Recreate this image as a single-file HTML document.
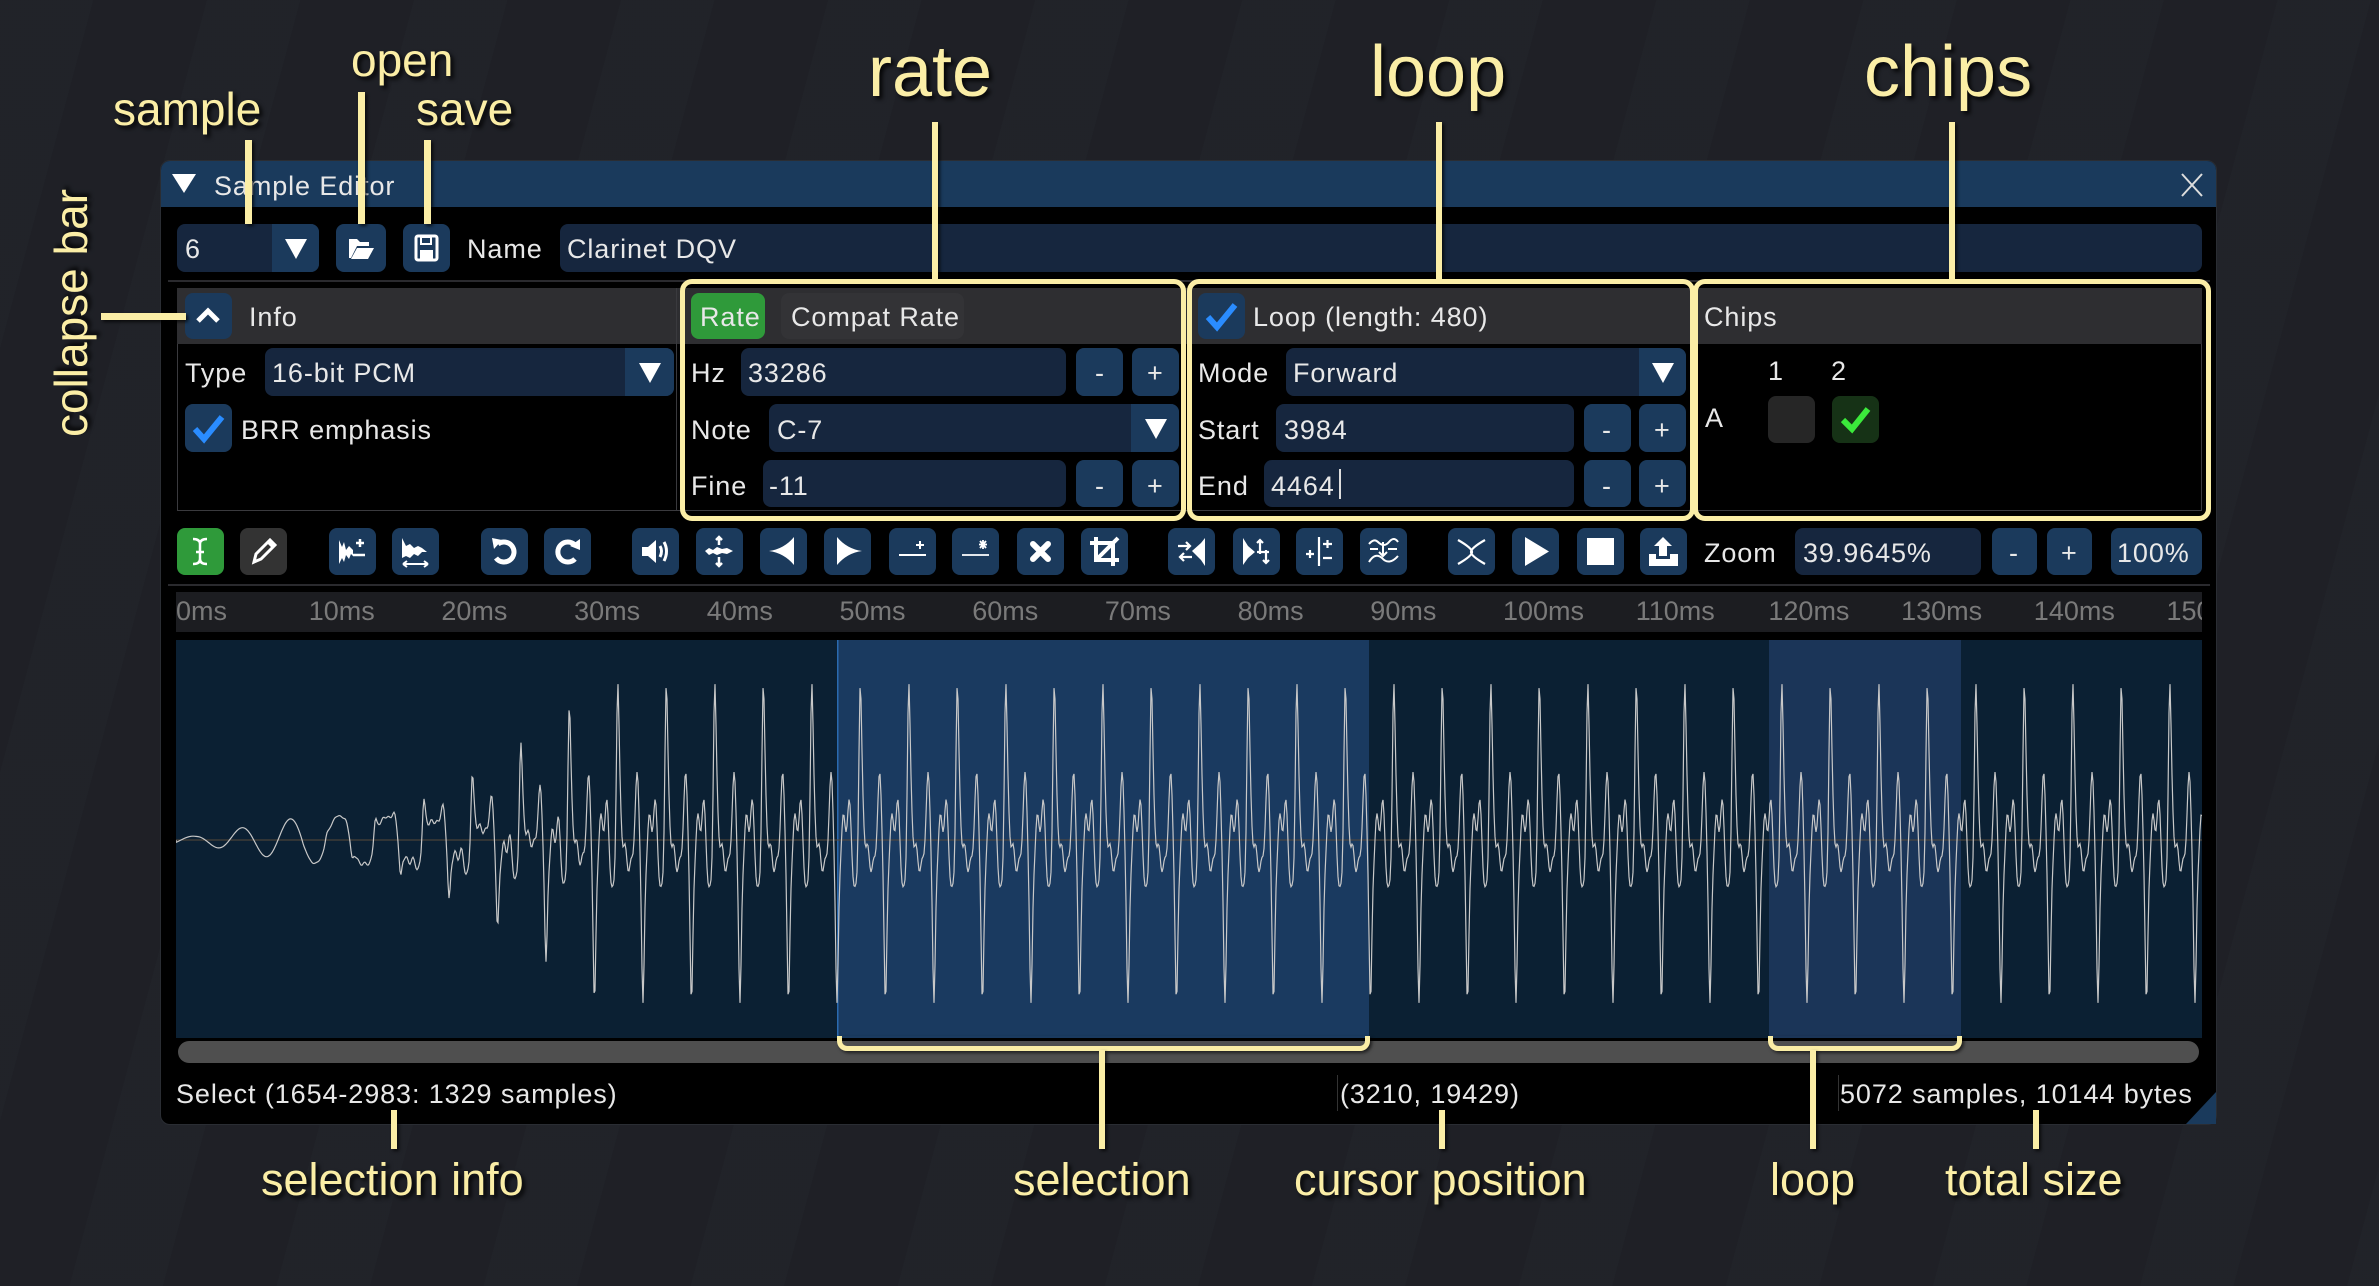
<!DOCTYPE html>
<html><head><meta charset="utf-8">
<style>
*{margin:0;padding:0;box-sizing:border-box}
body{width:2379px;height:1286px;overflow:hidden;position:relative;
background:#1f2127;
background-image:repeating-linear-gradient(105deg,rgba(255,255,255,0.006) 0 90px,rgba(0,0,0,0.015) 90px 200px);
font-family:"Liberation Sans",sans-serif;color:#e8e8e8;font-size:27px}
.a{position:absolute}
.win{position:absolute;left:160px;top:160px;width:2057px;height:965px;background:#000;border-radius:10px;border:1px solid #2a2d33;overflow:hidden}
.b{position:absolute;background:#1b3a5c;border-radius:8px;width:47px;height:47px}
.b svg{position:absolute;left:0;top:0}
.f{position:absolute;background:#16263e;border-radius:8px;height:48px}
.t{position:absolute;white-space:nowrap;line-height:1;letter-spacing:0.9px}
.y{position:absolute;background:#fbeea6;box-shadow:2px 2px 3px rgba(0,0,0,.7)}
.yt{position:absolute;color:#fbeea6;white-space:nowrap;line-height:1;text-shadow:3px 3px 4px rgba(0,0,0,.85)}
.ybox{position:absolute;border:5px solid #fbeea6;border-radius:12px}
.tl{position:absolute;top:598px;color:#7a7a7a;font-size:27px;line-height:1}
</style></head><body>

<div class="win"></div>
<div class="a" style="left:161px;top:161px;width:2055px;height:46px;background:#1a3a5c;border-radius:9px 9px 0 0"></div>
<svg class="a" style="left:170px;top:172px" width="28" height="22"><polygon points="2,2 26,2 14,21" fill="#fff"/></svg>
<div class="t" style="left:214px;top:173px">Sample Editor</div>
<svg class="a" style="left:2180px;top:172px" width="24" height="26"><path d="M2 2 L22 24 M22 2 L2 24" stroke="#ddd" stroke-width="2"/></svg>

<div class="f" style="left:177px;top:224px;width:142px"></div>
<div class="a" style="left:272px;top:224px;width:47px;height:48px;background:#1b3a5c;border-radius:0 8px 8px 0"></div>
<svg class="a" style="left:284px;top:238px" width="24" height="22"><polygon points="1,1 23,1 12,21" fill="#fff"/></svg>
<div class="t" style="left:185px;top:236px">6</div>
<div class="b" style="left:336px;top:224px;width:50px;height:48px"><svg width="50" height="48"><path d="M13 34 V15 h8 l3 3 h9 v4 h-12 l-6 12z M15 35 l6-11 h17 l-6 11z" fill="#fff"/></svg></div>
<div class="b" style="left:403px;top:224px;height:48px"><svg width="47" height="48"><rect x="13" y="12" width="21" height="24" rx="2" fill="none" stroke="#fff" stroke-width="3"/><rect x="18" y="13" width="10" height="7" fill="none" stroke="#fff" stroke-width="2"/><rect x="17" y="26" width="13" height="9" fill="#fff"/></svg></div>
<div class="t" style="left:467px;top:236px">Name</div>
<div class="f" style="left:560px;top:224px;width:1642px"></div>
<div class="t" style="left:567px;top:236px">Clarinet DQV</div>
<div class="a" style="left:168px;top:280px;width:2042px;height:2px;background:#2a2a2e"></div>

<div class="a" style="left:177px;top:288px;width:2025px;height:223px;border:1px solid #3a3a3e"></div>
<div class="a" style="left:177px;top:288px;width:2025px;height:56px;background:#2e2e31"></div>
<div class="a" style="left:676px;top:288px;width:1px;height:223px;background:#3a3a3e"></div>
<div class="b" style="left:185px;top:293px;height:46px"><svg width="47" height="46"><path d="M13 28 L23 18 L33 28" fill="none" stroke="#fff" stroke-width="5"/></svg></div>
<div class="t" style="left:249px;top:304px">Info</div>
<div class="t" style="left:185px;top:360px">Type</div>
<div class="f" style="left:265px;top:348px;width:409px"></div>
<div class="a" style="left:625px;top:348px;width:49px;height:48px;background:#1b3a5c;border-radius:0 8px 8px 0"></div>
<svg class="a" style="left:638px;top:362px" width="24" height="22"><polygon points="1,1 23,1 12,21" fill="#fff"/></svg>
<div class="t" style="left:272px;top:360px">16-bit PCM</div>
<div class="b" style="left:185px;top:404px;height:48px"><svg width="47" height="48"><path d="M10 25 L19 35 L37 13" fill="none" stroke="#2a8cff" stroke-width="6"/></svg></div>
<div class="t" style="left:241px;top:417px">BRR emphasis</div>
<div class="a" style="left:691px;top:293px;width:74px;height:46px;background:#2f9a3a;border-radius:8px"></div>
<div class="t" style="left:700px;top:304px">Rate</div>
<div class="a" style="left:781px;top:293px;width:183px;height:46px;background:#333336;border-radius:8px"></div>
<div class="t" style="left:791px;top:304px">Compat Rate</div>
<div class="t" style="left:691px;top:360px">Hz</div>
<div class="f" style="left:741px;top:348px;width:325px"></div>
<div class="t" style="left:748px;top:360px">33286</div>
<div class="b" style="left:1076px;top:348px;height:48px"></div><div class="t" style="left:1095px;top:360px">-</div>
<div class="b" style="left:1132px;top:348px;height:48px"></div><div class="t" style="left:1147px;top:360px">+</div>
<div class="t" style="left:691px;top:417px">Note</div>
<div class="f" style="left:769px;top:404px;width:410px"></div>
<div class="a" style="left:1131px;top:404px;width:48px;height:48px;background:#1b3a5c;border-radius:0 8px 8px 0"></div>
<svg class="a" style="left:1144px;top:418px" width="24" height="22"><polygon points="1,1 23,1 12,21" fill="#fff"/></svg>
<div class="t" style="left:777px;top:417px">C-7</div>
<div class="t" style="left:691px;top:473px">Fine</div>
<div class="f" style="left:763px;top:460px;width:303px;height:47px"></div>
<div class="t" style="left:769px;top:473px">-11</div>
<div class="b" style="left:1076px;top:460px"></div><div class="t" style="left:1095px;top:473px">-</div>
<div class="b" style="left:1132px;top:460px"></div><div class="t" style="left:1147px;top:473px">+</div>
<div class="b" style="left:1198px;top:293px;height:46px"><svg width="47" height="46"><path d="M10 24 L19 34 L37 12" fill="none" stroke="#2a8cff" stroke-width="6"/></svg></div>
<div class="t" style="left:1253px;top:304px">Loop (length: 480)</div>
<div class="t" style="left:1198px;top:360px">Mode</div>
<div class="f" style="left:1286px;top:348px;width:400px"></div>
<div class="a" style="left:1639px;top:348px;width:47px;height:48px;background:#1b3a5c;border-radius:0 8px 8px 0"></div>
<svg class="a" style="left:1651px;top:362px" width="24" height="22"><polygon points="1,1 23,1 12,21" fill="#fff"/></svg>
<div class="t" style="left:1293px;top:360px">Forward</div>
<div class="t" style="left:1198px;top:417px">Start</div>
<div class="f" style="left:1276px;top:404px;width:298px"></div>
<div class="t" style="left:1284px;top:417px">3984</div>
<div class="b" style="left:1584px;top:404px;height:48px"></div><div class="t" style="left:1602px;top:417px">-</div>
<div class="b" style="left:1639px;top:404px;height:48px"></div><div class="t" style="left:1654px;top:417px">+</div>
<div class="t" style="left:1198px;top:473px">End</div>
<div class="f" style="left:1264px;top:460px;width:310px;height:47px"></div>
<div class="t" style="left:1271px;top:473px">4464</div>
<div class="a" style="left:1339px;top:469px;width:2px;height:30px;background:#ddd"></div>
<div class="b" style="left:1584px;top:460px"></div><div class="t" style="left:1602px;top:473px">-</div>
<div class="b" style="left:1639px;top:460px"></div><div class="t" style="left:1654px;top:473px">+</div>
<div class="t" style="left:1704px;top:304px">Chips</div>
<div class="t" style="left:1768px;top:358px">1</div>
<div class="t" style="left:1831px;top:358px">2</div>
<div class="t" style="left:1705px;top:405px">A</div>
<div class="a" style="left:1768px;top:396px;width:47px;height:47px;background:#262626;border-radius:8px"></div>
<div class="a" style="left:1832px;top:396px;width:47px;height:47px;background:#163216;border-radius:8px"></div>
<svg class="a" style="left:1832px;top:396px" width="47" height="47"><path d="M11 24 L20 33 L36 13" fill="none" stroke="#3bea3b" stroke-width="6"/></svg>

<div class="b" style="left:177px;top:528px;background:#2f9a3a"><svg width="47" height="47"><path d="M16 11 Q23 11 23 16 Q23 11 30 11 M23 16 V31 M16 36 Q23 36 23 31 Q23 36 30 36 M19 24 H27" fill="none" stroke="#fff" stroke-width="2.5"/></svg></div>
<div class="b" style="left:240px;top:528px;background:#333"><svg width="47" height="47"><path d="M14 34 L16 26 L30 12 L35 17 L21 31 Z M28 14 L33 19" fill="none" stroke="#fff" stroke-width="3"/></svg></div>
<div class="b" style="left:329px;top:528px"><svg width="47" height="47"><path d="M10 12 V36 L13 30 L15 34 L17 27 L20 31 L22 26 L24 28 V22 L20 18 L17 22 L15 14 L13 19Z" fill="#fff"/><path d="M24 27 H36 M31 11 V19 M27 15 H35" stroke="#fff" stroke-width="2.5"/></svg></div>
<div class="b" style="left:392px;top:528px"><svg width="47" height="47"><path d="M10 10 V30 L14 28 L18 30 L22 26 L26 28 L30 24 L35 24 L30 20 L26 18 L22 20 L18 16 L14 18Z" fill="#fff"/><path d="M11 36 H36 M11 36 l4-3 M11 36 l4 3 M36 36 l-4-3 M36 36 l-4 3" stroke="#fff" stroke-width="2"/></svg></div>
<div class="b" style="left:481px;top:528px"><svg width="47" height="47"><path d="M17 16 A10 10 0 1 1 15 30" fill="none" stroke="#fff" stroke-width="5"/><polygon points="11,10 21,12 13,21" fill="#fff"/></svg></div>
<div class="b" style="left:544px;top:528px"><svg width="47" height="47"><path d="M31 17 A10 10 0 1 0 31 31" fill="none" stroke="#fff" stroke-width="5"/><polygon points="36,11 36,22 26,18" fill="#fff"/></svg></div>
<div class="b" style="left:632px;top:528px"><svg width="47" height="47"><path d="M10 19 H16 L24 12 V35 L16 28 H10Z" fill="#fff"/><path d="M28 18 Q31 23 28 29 M32 14 Q37 23 32 33" fill="none" stroke="#fff" stroke-width="3"/></svg></div>
<div class="b" style="left:696px;top:528px"><svg width="47" height="47"><path d="M9 23 L13 20 L17 22 L21 19 L26 21 L31 20 L37 23 L31 26 L26 25 L21 27 L17 25 L13 27Z" fill="#fff"/><path d="M23 17 V9 M20 12 L23 9 L26 12 M23 29 V38 M20 35 L23 38 L26 35" fill="none" stroke="#fff" stroke-width="2.5"/></svg></div>
<div class="b" style="left:760px;top:528px"><svg width="47" height="47"><path d="M9 23 Q24 21 34 9 V37 Q24 25 9 23Z" fill="#fff"/></svg></div>
<div class="b" style="left:824px;top:528px"><svg width="47" height="47"><path d="M38 23 Q23 21 13 9 V37 Q23 25 38 23Z" fill="#fff"/></svg></div>
<div class="b" style="left:889px;top:528px"><svg width="47" height="47"><path d="M10 27 H37 M31 13 V21 M27 17 H35" stroke="#fff" stroke-width="2"/></svg></div>
<div class="b" style="left:952px;top:528px"><svg width="47" height="47"><path d="M10 27 H37 M31 12 V21 M27 16.5 H35 M28 13 L34 20 M34 13 L28 20" stroke="#fff" stroke-width="1.8"/></svg></div>
<div class="b" style="left:1017px;top:528px"><svg width="47" height="47"><path d="M16 16 L31 31 M31 16 L16 31" stroke="#fff" stroke-width="6" stroke-linecap="round"/></svg></div>
<div class="b" style="left:1081px;top:528px"><svg width="47" height="47"><path d="M15 9 V32 H38 M9 15 H32 V38 M16 31 L37 10" fill="none" stroke="#fff" stroke-width="4"/></svg></div>
<div class="b" style="left:1168px;top:528px"><svg width="47" height="47"><path d="M10 18 H22 M18 14 L22 18 L18 22 M12 29 H24 M16 25 L12 29 L16 33" fill="none" stroke="#fff" stroke-width="2.2"/><path d="M24 23 L33 15 L37 10 V38 L33 32Z" fill="#fff"/></svg></div>
<div class="b" style="left:1233px;top:528px"><svg width="47" height="47"><path d="M10 10 V37 L15 30 L22 24 L15 18Z" fill="#fff"/><path d="M27 26 V12 M24 15 L27 12 L30 15 M33 22 V35 M30 32 L33 35 L36 32 M24 24 H36" fill="none" stroke="#fff" stroke-width="2.2"/></svg></div>
<div class="b" style="left:1296px;top:528px"><svg width="47" height="47"><path d="M23 9 V38 M10 26 H18 M14 22 V30 M27 16 H36 M31.5 12 V20 M27 30 H36" fill="none" stroke="#fff" stroke-width="2.2"/></svg></div>
<div class="b" style="left:1360px;top:528px"><svg width="47" height="47"><path d="M9 16 Q14 10 18 14 Q24 20 29 14 Q34 8 38 14 M9 34 Q15 24 22 30 Q29 38 38 28 M10 21 H18 M28 21 H37 M23 14 V28 M19 24 L23 28 L27 24" fill="none" stroke="#fff" stroke-width="2"/></svg></div>
<div class="b" style="left:1448px;top:528px"><svg width="47" height="47"><path d="M10 12 Q24 20 24 24 Q24 28 10 36 M37 12 Q23 20 23 24 Q23 28 37 36" fill="none" stroke="#fff" stroke-width="2.2"/></svg></div>
<div class="b" style="left:1512px;top:528px"><svg width="47" height="47"><polygon points="13,9 37,23.5 13,38" fill="#fff"/></svg></div>
<div class="b" style="left:1577px;top:528px"><svg width="47" height="47"><rect x="10" y="10" width="27" height="27" fill="#fff"/></svg></div>
<div class="b" style="left:1640px;top:528px"><svg width="47" height="47"><path d="M23 9 L32 18 H27 V28 H19 V18 H14Z M9 26 H16 V31 H30 V26 H38 V38 H9Z" fill="#fff"/></svg></div>
<div class="t" style="left:1704px;top:540px">Zoom</div>
<div class="f" style="left:1795px;top:528px;width:186px;height:47px"></div>
<div class="t" style="left:1803px;top:540px">39.9645%</div>
<div class="b" style="left:1992px;top:528px;width:45px"></div><div class="t" style="left:2009px;top:540px">-</div>
<div class="b" style="left:2047px;top:528px;width:45px"></div><div class="t" style="left:2061px;top:540px">+</div>
<div class="b" style="left:2111px;top:528px;width:91px"></div><div class="t" style="left:2117px;top:540px">100%</div>
<div class="a" style="left:168px;top:584px;width:2042px;height:2px;background:#2a2a2e"></div>

<div class="a" style="left:176px;top:592px;width:2026px;height:40px;background:#1c1d21;overflow:hidden" id="tl"></div>

<svg class="a" style="left:176px;top:640px" width="2026" height="398" id="wf">
<rect width="2026" height="398" fill="#0b2033"/>
<rect x="661" width="532" height="398" fill="#1a3a60"/>
<rect x="661" width="1.5" height="398" fill="#2a6ab0"/>
<rect x="1593" width="192" height="398" fill="#1b3558"/>
<line x1="0" y1="200" x2="2026" y2="200" stroke="#5a4a3a" stroke-width="1"/>
<path id="wp" d="" fill="none" stroke="#c8c8c8" stroke-width="1.2"/>
</svg>
<div class="a" style="left:178px;top:1041px;width:2021px;height:22px;background:#4f4f4f;border-radius:11px"></div>

<div class="t" style="left:176px;top:1081px">Select (1654-2983: 1329 samples)</div>
<div class="a" style="left:1337px;top:1075px;width:1px;height:36px;background:#333"></div>
<div class="t" style="left:1340px;top:1081px">(3210, 19429)</div>
<div class="a" style="left:1838px;top:1075px;width:1px;height:36px;background:#333"></div>
<div class="t" style="left:1840px;top:1081px">5072 samples, 10144 bytes</div>
<svg class="a" style="left:2186px;top:1092px" width="30" height="32"><polygon points="30,0 30,32 0,32" fill="#1a3a5c"/></svg>

<div class="yt" style="left:113px;top:86px;font-size:46px">sample</div>
<div class="yt" style="left:351px;top:37px;font-size:46px">open</div>
<div class="yt" style="left:416px;top:86px;font-size:46px">save</div>
<div class="y" style="left:245px;top:140px;width:7px;height:84px"></div>
<div class="y" style="left:358px;top:92px;width:7px;height:132px"></div>
<div class="y" style="left:424px;top:140px;width:7px;height:84px"></div>
<div class="yt" style="left:-53px;top:290px;font-size:46px;transform:rotate(-90deg);transform-origin:center">collapse bar</div>
<div class="y" style="left:101px;top:313px;width:85px;height:7px"></div>

<div class="yt" style="left:868px;top:36px;font-size:72px">rate</div>
<div class="yt" style="left:1370px;top:36px;font-size:72px">loop</div>
<div class="yt" style="left:1864px;top:36px;font-size:72px">chips</div>
<div class="y" style="left:932px;top:122px;width:6px;height:160px"></div>
<div class="y" style="left:1436px;top:122px;width:6px;height:160px"></div>
<div class="y" style="left:1949px;top:122px;width:6px;height:160px"></div>
<div class="ybox" style="left:680px;top:279px;width:506px;height:242px"></div>
<div class="ybox" style="left:1187px;top:279px;width:508px;height:242px"></div>
<div class="ybox" style="left:1693px;top:279px;width:518px;height:242px"></div>

<div class="a" style="left:837px;top:1036px;width:533px;height:15px;border:5px solid #fbeea6;border-top:none;border-radius:0 0 10px 10px;box-shadow:2px 2px 3px rgba(0,0,0,.6)"></div>
<div class="a" style="left:1768px;top:1036px;width:194px;height:15px;border:5px solid #fbeea6;border-top:none;border-radius:0 0 10px 10px;box-shadow:2px 2px 3px rgba(0,0,0,.6)"></div>
<div class="y" style="left:391px;top:1110px;width:6px;height:39px"></div>
<div class="y" style="left:1099px;top:1050px;width:6px;height:99px"></div>
<div class="y" style="left:1439px;top:1110px;width:6px;height:39px"></div>
<div class="y" style="left:1810px;top:1050px;width:6px;height:99px"></div>
<div class="y" style="left:2033px;top:1110px;width:6px;height:39px"></div>
<div class="yt" style="left:261px;top:1157px;font-size:45px">selection info</div>
<div class="yt" style="left:1013px;top:1157px;font-size:45px">selection</div>
<div class="yt" style="left:1294px;top:1157px;font-size:45px">cursor position</div>
<div class="yt" style="left:1770px;top:1157px;font-size:45px">loop</div>
<div class="yt" style="left:1945px;top:1157px;font-size:45px">total size</div>

<script>
(function(){
var tl=document.getElementById('tl'),h='';
for(var i=0;i<16;i++){h+='<div class="tl" style="top:6px;left:'+(i*132.7)+'px">'+(i*10)+'ms</div>';}
tl.innerHTML=h;
var P=48.5,d='M0 200',W=2026;
function g(p){p=((p%(2*Math.PI))+3*Math.PI)%(2*Math.PI)-Math.PI;return Math.exp(-p*p/0.05);}
for(var x=0;x<=W;x+=1){
 var ph=(x-5)/P*2*Math.PI;
 var env=Math.min(1,0.05+Math.max(0,x-20)/420);
 var sharp=Math.min(1,Math.max(0,(x-120)/300));
 var smooth=Math.sin(ph)*0.55;
 var spiky=0.82*g(ph)-0.88*g(ph-Math.PI*1.05)+0.28*Math.sin(3*ph+0.5)+0.14*Math.sin(5*ph+1.2)+0.08*Math.sin(8*ph);
 var v=env*((1-sharp)*smooth+sharp*spiky);
 var y=200-v*140;
 d+=' L'+x+' '+y.toFixed(1);
}
document.getElementById('wp').setAttribute('d',d);
})();
</script>
</body></html>
